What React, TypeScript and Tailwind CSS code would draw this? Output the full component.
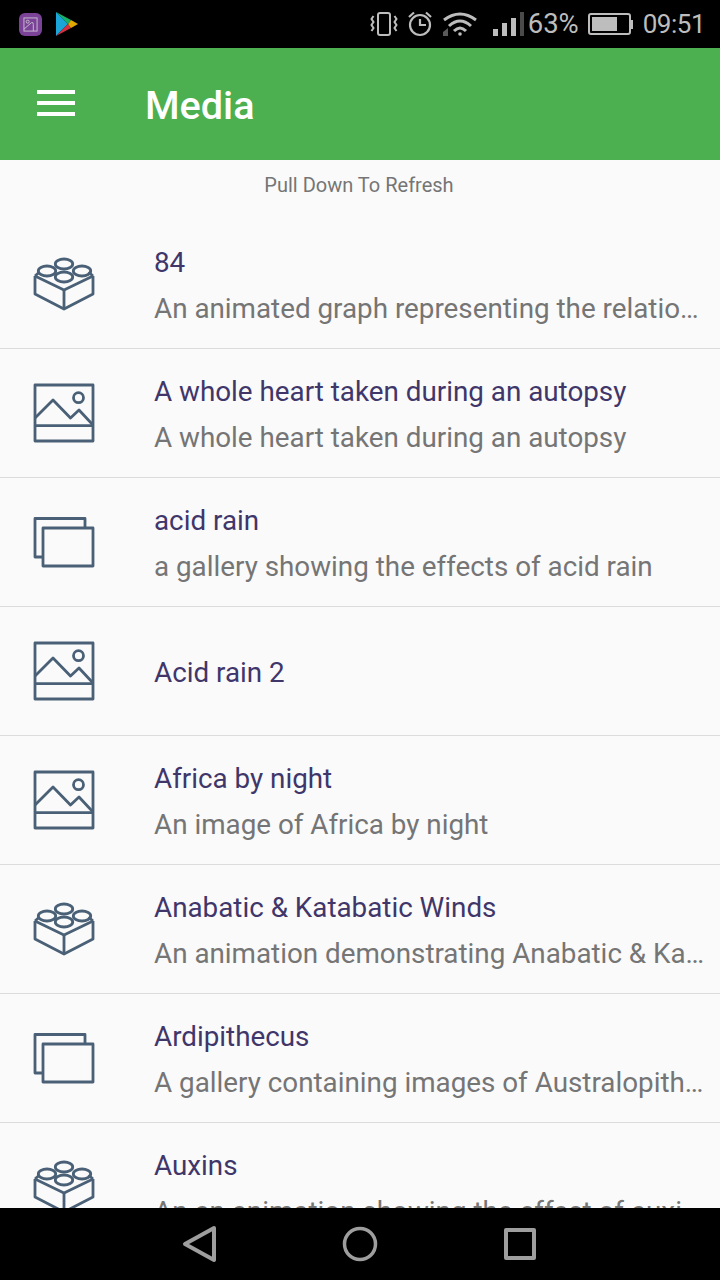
import React from "react";

type Kind = "brick" | "image" | "gallery";

const items: { kind: Kind; title: string; sub?: string }[] = [
  { kind: "brick", title: "84", sub: "An animated graph representing the relationship between variables" },
  { kind: "image", title: "A whole heart taken during an autopsy", sub: "A whole heart taken during an autopsy" },
  { kind: "gallery", title: "acid rain", sub: "a gallery showing the effects of acid rain" },
  { kind: "image", title: "Acid rain 2" },
  { kind: "image", title: "Africa by night", sub: "An image of Africa by night" },
  { kind: "brick", title: "Anabatic & Katabatic Winds", sub: "An animation demonstrating Anabatic & Katabatic Winds" },
  { kind: "gallery", title: "Ardipithecus", sub: "A gallery containing images of Australopithecus and Ardipithecus" },
  { kind: "brick", title: "Auxins", sub: "An an animation showing the effect of auxins on plant growth" },
];

function KindIcon({ kind }: { kind: Kind }) {
  return (
    <svg viewBox="0 0 64 64" className="w-[64px] h-[64px]" fill="none" stroke="#4a6076" strokeWidth="2.8" strokeLinejoin="round">
      {kind === "brick" && (
        <>
          <path d="M3 24 L3 42 L32 57 L61 42 L61 24" />
          <path d="M3 24 L32 38 L61 24" />
          <path d="M32 38 L32 57" />
          <path d="M7.5 20 L3 24" />
          <path d="M56.5 20 L61 24" />
          <ellipse cx="32" cy="12" rx="8.7" ry="5" />
          <ellipse cx="15" cy="19" rx="8.7" ry="5" />
          <ellipse cx="50" cy="19" rx="8.7" ry="5" />
          <ellipse cx="32" cy="25" rx="8.7" ry="5" />
        </>
      )}
      {kind === "image" && (
        <>
          <rect x="3" y="4" width="58" height="56" />
          <path d="M3 44.7 H61" />
          <path d="M3 37 L21 19 L38.5 37 L47 29 L61 44" />
          <circle cx="46.5" cy="16.7" r="5" />
        </>
      )}
      {kind === "gallery" && (
        <>
          <path d="M11 47 H3 V8.5 H53 V18" />
          <rect x="11" y="18" width="50" height="38" />
        </>
      )}
    </svg>
  );
}

function Row({ kind, title, sub }: { kind: Kind; title: string; sub?: string }) {
  return (
    <div className="h-[129px] shrink-0 flex items-center border-b border-[#dcdcdc]">
      <div className="w-[128px] pl-[32px] shrink-0 flex items-center">
        <KindIcon kind={kind} />
      </div>
      <div className="ml-[26px] min-w-0 flex-1 pr-[12px] pt-[4px]">
        <div className="text-[27.8px] leading-[46px] text-[#40366a] truncate">{title}</div>
        {sub && <div className="text-[27.8px] leading-[46px] text-[#757575] truncate">{sub}</div>}
      </div>
    </div>
  );
}

function StatusBar() {
  return (
    <div className="h-[48px] shrink-0 bg-black flex items-center pl-[19px] pr-[15px]">
      <div className="w-[23px] h-[23px] rounded-[6px] bg-[#7b4397] flex items-center justify-center">
        <svg viewBox="0 0 16 16" className="w-[15px] h-[15px]" fill="none" stroke="#c9c0d0" strokeWidth="1">
          <rect x="1" y="1" width="14" height="14" />
          <circle cx="5" cy="5" r="1.6" />
          <path d="M1 13 L9 6 Q11 5 11 8 L11 15" />
        </svg>
      </div>
      <svg viewBox="0 0 22 24" className="ml-[14px] w-[22px] h-[24px]">
        <path d="M0 0 L12 12 L0 24 Z" fill="#1aa6d8" />
        <path d="M0 0 L15 8 L12 12 Z" fill="#17b26a" />
        <path d="M0 24 L15 16 L12 12 Z" fill="#d8303f" />
        <path d="M15 8 L22 12 L15 16 L12 12 Z" fill="#e0a800" />
      </svg>
      <div className="flex-1" />
      <svg viewBox="0 0 28 24" className="w-[28px] h-[24px]" fill="none" stroke="#bdbdbd" strokeWidth="2">
        <rect x="8" y="1" width="12" height="22" rx="2" />
        <path d="M3.5 4 L1.5 7 L3.5 10 L1.5 13 L3.5 16 L1.5 19" />
        <path d="M24.5 4 L26.5 7 L24.5 10 L26.5 13 L24.5 16 L26.5 19" />
      </svg>
      <svg viewBox="0 0 26 26" className="ml-[9px] w-[26px] h-[26px]" fill="none" stroke="#bdbdbd" strokeWidth="2.2">
        <circle cx="13" cy="14" r="10" />
        <path d="M13 8 V14 H19" />
        <path d="M2 6 L7 1.5" />
        <path d="M24 6 L19 1.5" />
      </svg>
      <svg viewBox="0 0 36 26" className="ml-[9px] w-[36px] h-[26px]" fill="none" stroke="#bdbdbd" strokeWidth="3">
        <path d="M2 9 Q18 -3 34 9" />
        <path d="M7 15 Q18 5 29 15" />
        <path d="M12 20 Q18 14 24 20" />
        <circle cx="18" cy="23" r="1.8" fill="#bdbdbd" stroke="none" />
        <path d="M1 21 L6 17 V25 H1 Z" fill="#5a5a5a" stroke="none" />
      </svg>
      <div className="ml-[15px] flex items-end gap-[4px] h-[24px]">
        <div className="w-[5px] h-[7px] bg-[#bdbdbd]" />
        <div className="w-[5px] h-[13px] bg-[#bdbdbd]" />
        <div className="w-[5px] h-[18px] bg-[#bdbdbd]" />
        <div className="w-[4px] h-[24px] bg-[#4a4a4a]" />
      </div>
      <span className="ml-[4px] text-[27.5px] text-[#bdbdbd] leading-none">63%</span>
      <div className="ml-[9px] flex items-center">
        <div className="w-[43px] h-[22px] border-2 border-[#bdbdbd] rounded-[3px] p-[2px]">
          <div className="w-[25px] h-full bg-[#bdbdbd]" />
        </div>
        <div className="w-[2px] h-[9px] bg-[#bdbdbd]" />
      </div>
      <span className="ml-[10px] text-[26px] tracking-[-0.5px] text-[#bdbdbd] leading-none">09:51</span>
    </div>
  );
}

function NavBar() {
  return (
    <div className="h-[72px] shrink-0 bg-black flex items-center justify-center gap-[124px]">
      <svg viewBox="0 0 36 38" className="w-[36px] h-[38px]" fill="none" stroke="#9e9e9e" strokeWidth="4" strokeLinejoin="round">
        <path d="M32 3 L3 19 L32 35 Z" />
      </svg>
      <svg viewBox="0 0 36 36" className="w-[36px] h-[36px]" fill="none" stroke="#9e9e9e" strokeWidth="3.5">
        <circle cx="18" cy="18" r="15.5" />
      </svg>
      <svg viewBox="0 0 36 36" className="w-[36px] h-[36px]" fill="none" stroke="#9e9e9e" strokeWidth="4" strokeLinejoin="round">
        <rect x="4" y="4" width="28" height="28" />
      </svg>
    </div>
  );
}

export default function App() {
  return (
    <div className="w-[720px] h-[1280px] flex flex-col overflow-hidden bg-[#fafafa] font-['Roboto',sans-serif]">
      <StatusBar />

      {/* Toolbar */}
      <div className="h-[112px] shrink-0 bg-[#4caf50] flex items-center">
        <div className="ml-[37px] w-[38px] flex flex-col gap-[7px] -mt-[2px]">
          <div className="h-[4px] bg-white" />
          <div className="h-[4px] bg-white" />
          <div className="h-[4px] bg-white" />
        </div>
        <span className="ml-[70px] pt-[4px] text-[39.6px] font-medium text-white">Media</span>
      </div>

      {/* List */}
      <div className="flex-1 min-h-0 overflow-hidden">
        <div className="h-[60px] pt-[11px] pr-[2px] text-center text-[20px] leading-[28px] text-[#757575]">Pull Down To Refresh</div>
        {items.map((item) => (
          <Row key={item.title} {...item} />
        ))}
      </div>

      <NavBar />
    </div>
  );
}
